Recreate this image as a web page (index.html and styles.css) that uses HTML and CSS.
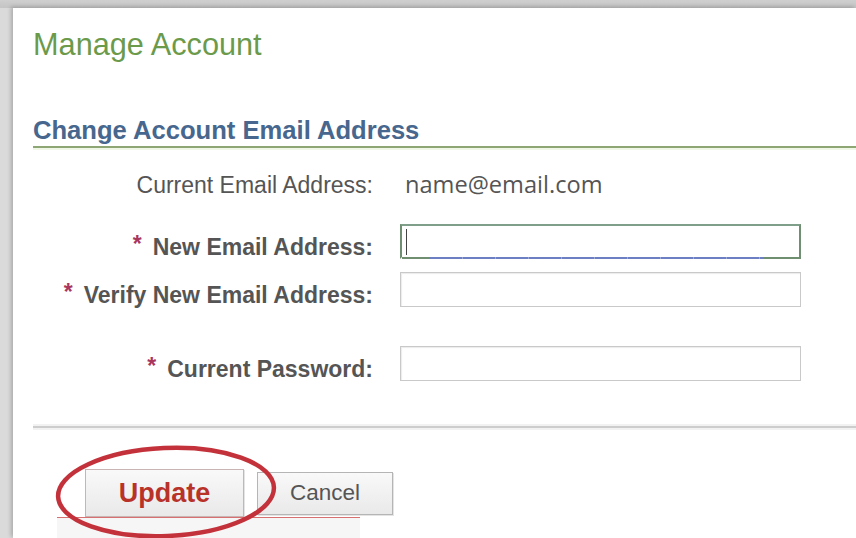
FILE: index.html
```html
<!DOCTYPE html>
<html lang="en">
<head>
<meta charset="utf-8">
<title>Manage Account</title>
<link rel="stylesheet" href="styles.css">
</head>
<body>
<div class="frame">
  <div class="panel">
    <h1 class="title">Manage Account</h1>
    <h2 class="section">Change Account Email Address</h2>

    <form class="form">
      <div class="row info">
        <span class="label plain">Current Email Address:</span>
        <span class="value">name@email.com</span>
      </div>
      <div class="row">
        <label class="label" for="new-email"><span class="star">*</span>New Email Address:</label>
        <input class="field focused" id="new-email" type="text">
      </div>
      <div class="row tight">
        <label class="label" for="verify-email"><span class="star">*</span>Verify New Email Address:</label>
        <input class="field" id="verify-email" type="text">
      </div>
      <div class="row spaced">
        <label class="label" for="password"><span class="star">*</span>Current Password:</label>
        <input class="field" id="password" type="password">
      </div>
    </form>

    <hr class="rule">

    <div class="actions">
      <button class="btn primary" type="button">Update</button>
      <button class="btn" type="button">Cancel</button>
    </div>
  </div>

  <!-- hand-drawn highlight ring around the Update button -->
  <svg class="ring" viewBox="0 0 320 98" width="320" height="98" aria-hidden="true">
    <rect x="7" y="78" width="303" height="20" fill="#f6f6f6"/>
    <line x1="7" y1="77.5" x2="310" y2="77.5" stroke="#d77070" stroke-width="1"/>
    <ellipse cx="116" cy="52" rx="108" ry="44" transform="rotate(-2.5 116 52)"
             fill="none" stroke="#c3323a" stroke-width="4.5"/>
  </svg>
</div>
</body>
</html>
```

FILE: styles.css
```css
* {
  box-sizing: border-box;
}

html, body {
  margin: 0;
  padding: 0;
}

body {
  background: #d9d9d9;
  font-family: "Liberation Sans", Arial, Helvetica, sans-serif;
  color: #555;
}

.frame {
  position: relative;
  width: 856px;
  height: 538px;
  overflow: hidden;
  background: linear-gradient(#cfcfcf, #c4c4c4 8px, #dadada 8px);
}

.panel {
  margin: 8px 0 0 13px;
  height: 530px;
  background: #fff;
  padding: 20px 0 0 20px;
  box-shadow: -2px -1px 4px rgba(0, 0, 0, 0.22);
}

.title {
  margin: 0;
  font-size: 30.7px;
  line-height: 34px;
  font-weight: normal;
  color: #6c9a4b;
}

.section {
  margin: 53px 0 0;
  padding-bottom: 1px;
  font-size: 25.6px;
  line-height: 30px;
  font-weight: bold;
  color: #47678e;
  border-bottom: 2px solid #8ea673;
  box-shadow: 0 2px 0 #f1f7e6;
}

.form {
  margin-top: 24px;
}

.row {
  display: grid;
  grid-template-columns: 340px 401px;
  column-gap: 27px;
  align-items: end;
}

.row.info {
  align-items: baseline;
  margin-bottom: 27px;
}

.row.tight {
  margin-top: 13px;
}

.row.spaced {
  margin-top: 39px;
}

.label {
  text-align: right;
  font-size: 23px;
  line-height: 24px;
  font-weight: bold;
  color: #555;
  white-space: nowrap;
}

.label.plain {
  font-weight: normal;
}

.star {
  color: #a8365d;
  margin-right: 11px;
  vertical-align: 3px;
}

.value {
  padding-left: 5px;
  font-family: "Open Sans", "Liberation Sans", sans-serif;
  font-size: 23.6px;
  line-height: 24px;
  color: #555;
}

.field {
  display: block;
  width: 401px;
  height: 35px;
  margin: 0;
  padding: 0 6px;
  border: 1px solid #c9c9c9;
  border-radius: 0;
  background: #fff;
  box-shadow: inset 1px 1px 1px #ececec;
  font: 20px "Liberation Sans", Arial, sans-serif;
  outline: none;
}

/* focused field: green frame whose bottom edge turns blue in the middle, plus a text caret */
.field.focused {
  border: 2px solid #6f8f70;
  border-top-color: #7f9f8a;
  border-bottom-color: transparent;
  box-shadow: none;
  background:
    linear-gradient(#444, #444) no-repeat 6px 5px / 1px 26px,
    repeating-linear-gradient(90deg, #6c7fc2 0 32px, #9aa6d8 32px 33px) no-repeat 30px 100% / 334px 2px,
    linear-gradient(#6f8f70, #6f8f70) no-repeat 0 100% / 100% 2px,
    #fff;
  background-origin: border-box;
}

.rule {
  margin: 45px 0 0;
  height: 2px;
  border: 0;
  background: #cdcdcd;
  box-shadow: 0 -2px 0 #f2f2f2, 0 2px 0 #f2f2f2;
}

.actions {
  display: flex;
  align-items: center;
  gap: 13px;
  margin-top: 41px;
  padding-left: 52px;
}

.btn {
  margin: 0;
  height: 43px;
  width: 136px;
  padding: 0;
  border: 1px solid #b5b5b5;
  border-radius: 0;
  background: linear-gradient(#f9f9f9, #e9e9e9);
  box-shadow: 1px 1px 0 #e4e4e4;
  font-family: "Liberation Sans", Arial, sans-serif;
  font-size: 22.5px;
  color: #555;
  cursor: pointer;
}

.btn.primary {
  width: 159px;
  height: 48px;
  border-color: #c9b3b3;
  font-size: 27px;
  font-weight: bold;
  color: #b8322a;
}

.ring {
  position: absolute;
  left: 50px;
  top: 440px;
  pointer-events: none;
}
```
